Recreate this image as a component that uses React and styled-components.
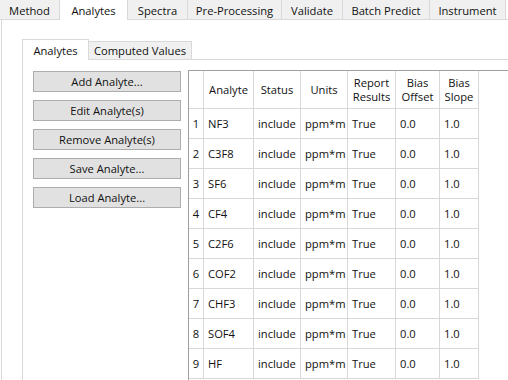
import styled, { createGlobalStyle } from 'styled-components';

const GlobalStyle = createGlobalStyle`
	body {
		margin: 0;
		background: #fff;
	}
`;

const Window = styled.div`
	width: 508px;
	height: 380px;
	overflow: hidden;
	background: #fff;
	display: flex;
	flex-direction: column;
	font-family: 'Open Sans', 'Noto Sans', sans-serif;
	font-size: 11.2px;
	color: #111;
`;

const TabBar = styled.div`
	display: flex;
	flex-shrink: 0;
	height: 19px;
	border-bottom: 1px solid #d9d9d9;
`;

const Tab = styled.div`
	width: ${(p) => p.w}px;
	box-sizing: border-box;
	display: flex;
	align-items: center;
	justify-content: center;
	padding-top: ${(p) => (p.active ? 0 : 2)}px;
	background: ${(p) => (p.active ? '#fff' : '#f0f0f0')};
	border-right: 1px solid #d9d9d9;
	margin-bottom: ${(p) => (p.active ? -1 : 0)}px;
	white-space: nowrap;
`;

const Pane = styled.div`
	flex: 1;
	display: flex;
	flex-direction: column;
	margin-left: 1px;
	border-left: 1px solid #d9d9d9;
	padding: 19px 0 0 20px;
	min-height: 0;
`;

const SubTabBar = styled.div`
	display: flex;
	align-items: flex-end;
	flex-shrink: 0;
	height: 20px;
	border-bottom: 1px solid #d9d9d9;
`;

const SubTab = styled.div`
	width: ${(p) => p.w}px;
	height: ${(p) => (p.active ? 21 : 18)}px;
	box-sizing: border-box;
	display: flex;
	align-items: center;
	justify-content: center;
	background: ${(p) => (p.active ? '#fff' : '#f0f0f0')};
	border-top: 1px solid #d9d9d9;
	border-right: 1px solid #d9d9d9;
	border-left: ${(p) => (p.active ? '1px solid #d9d9d9' : 'none')};
	margin-bottom: ${(p) => (p.active ? -1 : 0)}px;
	white-space: nowrap;
`;

const SubPane = styled.div`
	flex: 1;
	display: flex;
	border-left: 1px solid #d9d9d9;
	padding-top: 10px;
	min-height: 0;
`;

const ButtonColumn = styled.div`
	width: 165px;
	box-sizing: border-box;
	flex-shrink: 0;
	display: flex;
	flex-direction: column;
	gap: 8px;
	padding: 1px 0 0 10px;
`;

const Button = styled.button`
	width: 148px;
	height: 21px;
	padding: 0;
	font: inherit;
	color: #111;
	background: #e1e1e1;
	border: 1px solid #adadad;
	border-radius: 0;
`;

const TableFrame = styled.div`
	flex: 1;
	border-top: 1px solid #a0a0a0;
	border-left: 1px solid #a0a0a0;
	overflow: hidden;
`;

const Grid = styled.div`
	display: grid;
	grid-template-columns: 15px 50px 47px 47px 48px 44px 39px;
	width: max-content;
`;

const Cell = styled.div`
	box-sizing: border-box;
	height: ${(p) => (p.header ? 38 : 30)}px;
	display: flex;
	align-items: center;
	justify-content: ${(p) => (p.center ? 'center' : 'flex-start')};
	text-align: center;
	line-height: 14px;
	padding-left: ${(p) => (p.center ? 0 : 4)}px;
	border-right: 1px solid #d8d8d8;
	border-bottom: 1px solid #d8d8d8;
	white-space: nowrap;
`;

const topTabs = [
	['Method', 60],
	['Analytes', 68, true],
	['Spectra', 60],
	['Pre-Processing', 94],
	['Validate', 61],
	['Batch Predict', 87],
	['Instrument', 76],
];

const buttons = ['Add Analyte...', 'Edit Analyte(s)', 'Remove Analyte(s)', 'Save Analyte...', 'Load Analyte...'];

const headers = ['', 'Analyte', 'Status', 'Units', ['Report', 'Results'], ['Bias', 'Offset'], ['Bias', 'Slope']];

const analytes = ['NF3', 'C3F8', 'SF6', 'CF4', 'C2F6', 'COF2', 'CHF3', 'SOF4', 'HF'];

export default function App() {
	return (
		<>
			<GlobalStyle />
			<Window>
				<TabBar>
					{topTabs.map(([label, w, active]) => (
						<Tab key={label} w={w} active={active}>
							{label}
						</Tab>
					))}
				</TabBar>
				<Pane>
					<SubTabBar>
						<SubTab w={67} active>
							Analytes
						</SubTab>
						<SubTab w={103}>Computed Values</SubTab>
					</SubTabBar>
					<SubPane>
						<ButtonColumn>
							{buttons.map((label) => (
								<Button key={label}>{label}</Button>
							))}
						</ButtonColumn>
						<TableFrame>
							<Grid>
								{headers.map((h, i) => (
									<Cell key={'h' + i} header center>
										{Array.isArray(h) ? (
											<span>
												{h[0]}
												<br />
												{h[1]}
											</span>
										) : (
											h
										)}
									</Cell>
								))}
								{analytes.map((name, idx) => [
									<Cell key={'n' + idx} center>
										{idx + 1}
									</Cell>,
									<Cell key={'a' + idx}>{name}</Cell>,
									<Cell key={'s' + idx}>include</Cell>,
									<Cell key={'u' + idx}>ppm*m</Cell>,
									<Cell key={'r' + idx}>True</Cell>,
									<Cell key={'o' + idx}>0.0</Cell>,
									<Cell key={'b' + idx}>1.0</Cell>,
								])}
							</Grid>
						</TableFrame>
					</SubPane>
				</Pane>
			</Window>
		</>
	);
}
